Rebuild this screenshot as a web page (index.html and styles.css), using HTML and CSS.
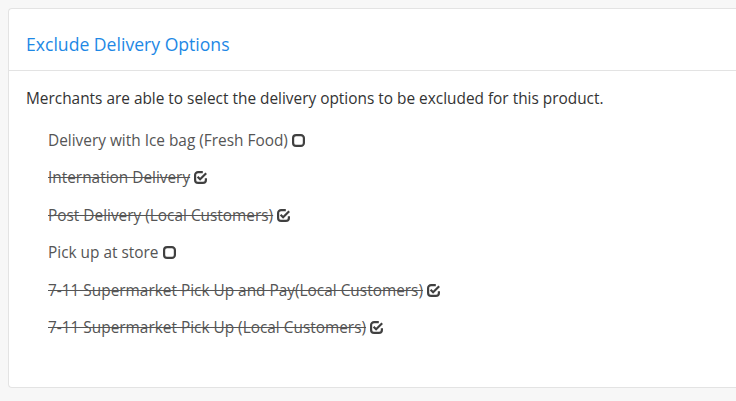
FILE: index.html
```html
<!DOCTYPE html>
<html>
<head>
<meta charset="utf-8">
<link rel="stylesheet" href="styles.css">
</head>
<body>
<div class="card">
  <div class="card-header">Exclude Delivery Options</div>
  <div class="card-body">
    <p class="intro">Merchants are able to select the delivery options to be excluded for this product.</p>
    <ul class="options">
      <li><span class="label">Delivery with Ice bag (Fresh Food)</span><svg class="ico" viewBox="0 0 13 13"><rect x="1.1" y="1.1" width="10.8" height="10.8" rx="3" fill="none" stroke="#404040" stroke-width="2.2"/></svg></li>
      <li class="off"><span class="label">Internation Delivery</span><svg class="ico" viewBox="0 0 13 13"><path d="M8.8 1.1H4.1A3 3 0 0 0 1.1 4.1v4.8a3 3 0 0 0 3 3h4.8a3 3 0 0 0 3-3V7.2" fill="none" stroke="#404040" stroke-width="2.2"/><path d="M3.6 5.8L6.1 8.3 12.2 2.2" fill="none" stroke="#404040" stroke-width="2.2"/></svg></li>
      <li class="off"><span class="label">Post Delivery (Local Customers)</span><svg class="ico" viewBox="0 0 13 13"><path d="M8.8 1.1H4.1A3 3 0 0 0 1.1 4.1v4.8a3 3 0 0 0 3 3h4.8a3 3 0 0 0 3-3V7.2" fill="none" stroke="#404040" stroke-width="2.2"/><path d="M3.6 5.8L6.1 8.3 12.2 2.2" fill="none" stroke="#404040" stroke-width="2.2"/></svg></li>
      <li><span class="label">Pick up at store</span><svg class="ico" viewBox="0 0 13 13"><rect x="1.1" y="1.1" width="10.8" height="10.8" rx="3" fill="none" stroke="#404040" stroke-width="2.2"/></svg></li>
      <li class="off"><span class="label">7-11 Supermarket Pick Up and Pay(Local Customers)</span><svg class="ico" viewBox="0 0 13 13"><path d="M8.8 1.1H4.1A3 3 0 0 0 1.1 4.1v4.8a3 3 0 0 0 3 3h4.8a3 3 0 0 0 3-3V7.2" fill="none" stroke="#404040" stroke-width="2.2"/><path d="M3.6 5.8L6.1 8.3 12.2 2.2" fill="none" stroke="#404040" stroke-width="2.2"/></svg></li>
      <li class="off"><span class="label">7-11 Supermarket Pick Up (Local Customers)</span><svg class="ico" viewBox="0 0 13 13"><path d="M8.8 1.1H4.1A3 3 0 0 0 1.1 4.1v4.8a3 3 0 0 0 3 3h4.8a3 3 0 0 0 3-3V7.2" fill="none" stroke="#404040" stroke-width="2.2"/><path d="M3.6 5.8L6.1 8.3 12.2 2.2" fill="none" stroke="#404040" stroke-width="2.2"/></svg></li>
    </ul>
  </div>
</div>
</body>
</html>
```

FILE: styles.css
```css
body {
  margin: 8px 0 8px 8px;
  background: #f7f7f7;
  font-family: "Open Sans", "Liberation Sans", sans-serif;
  color: #333;
}
.card {
  background: #fff;
  border: 1px solid #e3e3e3;
  border-right: none;
  border-radius: 4px 0 0 4px;
}
.card-header {
  height: 62px;
  box-sizing: border-box;
  padding: 8px 17px 0;
  display: flex;
  align-items: center;
  font-size: 17.6px;
  color: #1e88e5;
  border-bottom: 1px solid #e3e3e3;
}
.card-body {
  padding: 17px 17px 49px;
}
.intro {
  margin: 0 0 21px;
  font-size: 15.4px;
  line-height: 21px;
}
.options {
  list-style: none;
  margin: 0;
  padding: 0 0 0 22px;
  display: flex;
  flex-direction: column;
  gap: 16.4px;
}
.options li {
  display: flex;
  align-items: center;
  gap: 4px;
  font-size: 15.4px;
  line-height: 21px;
  color: #555;
}
.options li.off .label {
  text-decoration: line-through;
}
.ico {
  width: 13px;
  height: 13px;
}
```
